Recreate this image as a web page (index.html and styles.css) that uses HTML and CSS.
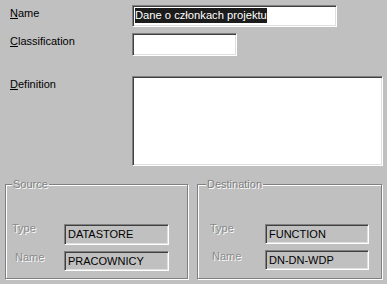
FILE: index.html
```html
<!DOCTYPE html>
<html>
<head>
<meta charset="utf-8">
<link rel="stylesheet" href="styles.css">
</head>
<body>
<div class="dialog">
  <div class="top">
    <label class="lbl"><u>N</u>ame</label>
    <div class="edit edit-name"><span class="sel">Dane o członkach projektu</span></div>
    <label class="lbl"><u>C</u>lassification</label>
    <div class="edit edit-class"></div>
    <label class="lbl lbl-def"><u>D</u>efinition</label>
    <div class="edit edit-def"></div>
  </div>
  <div class="groups">
    <div class="group group-src">
      <span class="caption">Source</span>
      <span class="glbl glbl-type">Type</span>
      <div class="ro ro-type">DATASTORE</div>
      <span class="glbl glbl-name">Name</span>
      <div class="ro ro-name">PRACOWNICY</div>
    </div>
    <div class="group group-dst">
      <span class="caption">Destination</span>
      <span class="glbl glbl-type">Type</span>
      <div class="ro ro-type">FUNCTION</div>
      <span class="glbl glbl-name">Name</span>
      <div class="ro ro-name">DN-DN-WDP</div>
    </div>
  </div>
</div>
</body>
</html>
```
FILE: styles.css
```css
html, body {
  margin: 0;
  padding: 0;
  background: #c0c0c0;
}
body {
  width: 387px;
  height: 284px;
  overflow: hidden;
  font-family: "Liberation Sans", Arial, sans-serif;
  font-size: 11px;
  color: #000;
}
.dialog {
  display: flex;
  flex-direction: column;
}
.top {
  display: grid;
  grid-template-columns: 122px auto;
  padding: 5px 0 0 10px;
  align-items: start;
}
.lbl {
  padding-top: 2px;
  line-height: 13px;
}
.lbl u { text-decoration: underline; }
.edit {
  box-sizing: border-box;
  background: #fff;
  border-top: 1px solid #808080;
  border-left: 1px solid #808080;
  border-right: 1px solid #fff;
  border-bottom: 1px solid #fff;
  box-shadow: inset 1px 1px 0 #404040, inset -1px -1px 0 #dfdfdf;
}
.edit-name {
  width: 205px;
  height: 22px;
  margin-bottom: 6px;
  padding: 2px 0 0 2px;
}
.sel {
  display: inline-block;
  background: #1c1c1c;
  color: #fff;
  line-height: 15px;
  font-size: 11.2px;
}
.edit-class {
  width: 105px;
  height: 23px;
  margin-bottom: 20px;
}
.edit-def {
  width: 251px;
  height: 90px;
}
.groups {
  display: flex;
  gap: 9px;
  padding-left: 5px;
  margin-top: 18px;
}
.group {
  position: relative;
  box-sizing: border-box;
  height: 95px;
  border: 1px solid #808080;
  box-shadow: 1px 1px 0 #fff, inset 1px 1px 0 #fff;
  display: grid;
  align-content: start;
  row-gap: 6px;
  padding-top: 39px;
}
.group-src {
  width: 183px;
  grid-template-columns: 52px 105px;
  padding-left: 6px;
}
.group-dst {
  width: 185px;
  grid-template-columns: 55px 104px;
  padding-left: 12px;
}
.caption {
  position: absolute;
  top: -7px;
  left: 6px;
  padding: 0 1px;
  background: #c0c0c0;
  color: #808080;
  text-shadow: 1px 1px 0 #fff;
  line-height: 13px;
}
.group-dst .caption { left: 8px; }
.glbl {
  color: #8a8a8a;
  text-shadow: 1px 1px 0 #fff;
  line-height: 13px;
}
.glbl-type { margin-top: -2px; }
.glbl-name { margin-top: 0; padding-left: 3px; }
.group-dst .glbl-name { padding-left: 2px; }
.ro {
  box-sizing: border-box;
  height: 20px;
  padding-left: 3px;
  line-height: 18px;
  background: #c0c0c0;
  border-top: 1px solid #808080;
  border-left: 1px solid #808080;
  border-right: 1px solid #fff;
  border-bottom: 1px solid #fff;
  box-shadow: inset 1px 1px 0 #404040, inset -1px -1px 0 #dfdfdf;
}
.group-src .ro-type { height: 21px; line-height: 19px; }
```
